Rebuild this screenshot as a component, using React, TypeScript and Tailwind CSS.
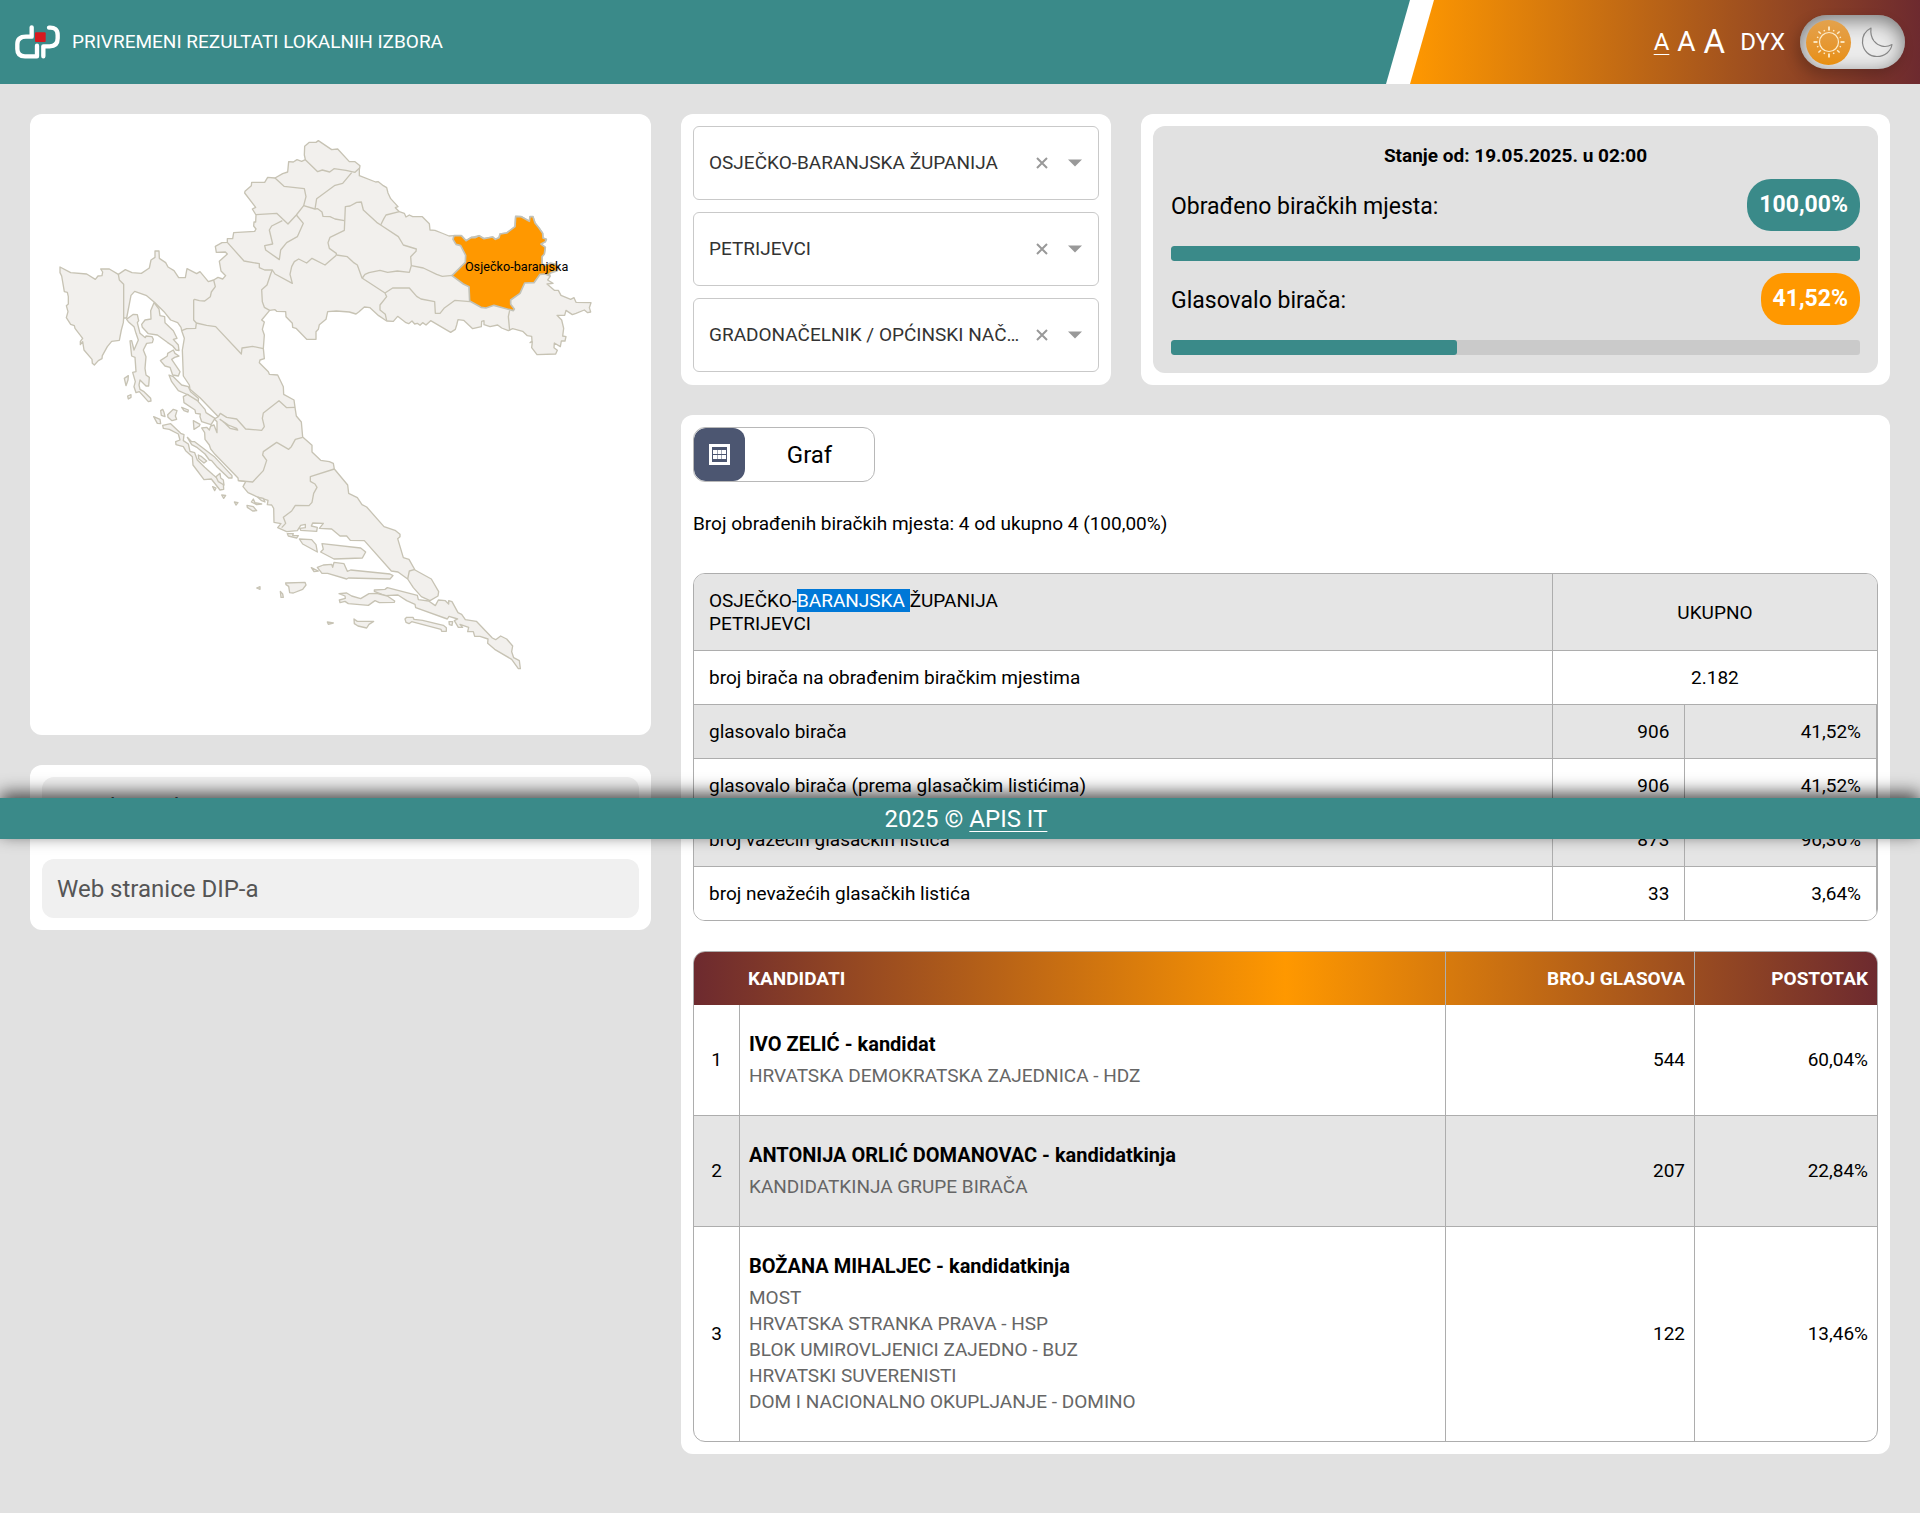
import React from "react";

const MAINLAND =
  "M90,441 122,458 170,462 196,478 204,468 216,467 218,456 212,447 238,447 265,463 286,449 306,458 334,460 358,444 363,420 375,412 375,393 387,393 388,415 407,428 414,441 432,452 446,473 466,473 471,446 500,461 510,455 535,485 551,480 564,472 578,477 587,467 573,453 568,424 592,402 586,396 559,397 556,379 576,368 592,367 592,356 608,356 611,338 674,334 678,327 671,318 672,306 677,306 678,285 667,267 677,262 644,219 645,214 664,197 665,187 704,187 713,172 735,174 758,161 773,156 776,125 790,126 801,119 815,124 826,119 823,105 824,79 838,67 858,67 865,62 905,89 923,87 958,125 975,125 990,137 988,150 988,167 1037,186 1045,185 1060,197 1070,203 1074,219 1082,236 1104,260 1096,263 1108,275 1123,280 1128,291 1138,285 1148,290 1177,290 1198,311 1200,330 1215,331 1235,339 1257,348 1272,347 1294,347 1308,362 1325,352 1347,347 1362,356 1388,351 1396,358 1407,353 1410,342 1430,339 1455,320 1457,289 1474,290 1498,304 1500,290 1509,290 1515,309 1527,324 1538,340 1539,354 1549,358 1546,365 1533,372 1546,382 1543,402 1536,410 1536,432 1560,470 1553,480 1569,490 1551,492 1573,511 1585,511 1593,526 1622,538 1632,533 1638,547 1683,548 1678,563 1682,576 1673,578 1663,570 1638,580 1627,584 1608,571 1604,586 1581,586 1595,600 1601,625 1598,648 1608,650 1605,663 1594,663 1591,680 1573,669 1572,683 1582,691 1577,702 1521,704 1505,683 1507,665 1500,668 1506,663 1505,649 1492,647 1478,634 1448,626 1435,632 1415,624 1403,615 1380,620 1362,614 1362,602 1355,604 1354,620 1328,626 1301,601 1284,599 1280,615 1276,628 1262,637 1202,602 1188,615 1178,608 1170,616 1162,610 1154,612 1146,603 1136,611 1128,608 1103,589 1090,604 1070,603 1046,587 1020,563 1003,561 987,575 978,582 958,576 919,573 893,575 888,598 868,614 865,628 858,635 858,658 830,658 798,625 788,622 787,610 768,590 767,575 740,574 735,569 719,571 695,600 703,606 697,628 703,645 700,685 703,716 690,720 688,728 715,755 718,763 743,765 760,800 761,823 792,840 795,862 799,888 814,906 818,951 846,976 846,996 872,1021 898,1025 910,1030 913,1047 953,1095 956,1120 982,1133 996,1154 1010,1161 1062,1220 1095,1231 1110,1243 1110,1250 1103,1256 1120,1313 1137,1318 1155,1350 1204,1377 1226,1415 1224,1428 1200,1442 1174,1430 1150,1403 1133,1377 1104,1356 1084,1353 1003,1262 961,1261 950,1248 930,1248 905,1227 868,1225 880,1210 848,1209 844,1218 862,1222 860,1234 812,1231 810,1225 826,1223 826,1213 812,1216 802,1232 770,1235 743,1223 753,1211 732,1207 731,1165 725,1155 712,1154 714,1141 680,1130 654,1118 639,1100 647,1085 625,1082 624,1074 555,1003 542,987 538,975 525,958 524,938 515,924 530,922 538,930 542,918 552,915 561,938 561,905 553,897 565,890 510,833 480,808 478,795 460,768 457,690 463,655 455,632 453,622 443,608 422,600 402,575 375,548 350,527 314,514 303,526 290,594 281,594 280,608 274,630 268,661 245,664 232,680 217,707 216,716 205,722 193,735 187,730 186,718 162,690 158,665 151,674 151,664 158,655 135,625 133,617 122,613 109,593 114,575 109,557 115,552 115,530 112,517 103,515 95,468 90,458Z";

const OSIJEK =
  "M1272,347 1294,347 1308,362 1325,352 1335,353 1347,347 1362,356 1388,351 1396,358 1407,353 1410,342 1430,339 1455,320 1457,289 1474,290 1498,304 1500,290 1509,290 1515,309 1527,324 1538,340 1539,354 1549,358 1546,365 1533,372 1546,382 1543,402 1536,410 1536,432 1546,436 1562,429 1574,432 1586,440 1582,452 1566,457 1558,461 1560,468 1546,462 1530,463 1512,488 1484,489 1470,520 1442,540 1442,553 1453,567 1450,572 1392,556 1368,564 1353,562 1319,543 1317,500 1300,492 1266,467 1306,427 1307,406 1292,377 1278,373 1269,358Z";

const BORDERS = [
  "M265,463 268,480 281,493 281,594",
  "M551,480 556,500 544,516 541,530 524,543 508,542 494,538 491,540 491,600 499,609 497,625 470,626 455,632",
  "M499,609 530,616 557,620 634,702 636,684 668,679 700,686",
  "M592,367 642,423 688,431 688,443 704,450 727,450 722,462 711,495 695,509 697,545 703,562 719,571",
  "M727,450 735,462 787,490 780,463 785,440 793,425 806,417 830,429 846,415 885,435 919,406",
  "M919,405 919,400 898,385 894,368 900,352 943,331 946,260 960,258 980,247 994,246 1000,270 1040,307 1052,315 1105,350 1120,375 1159,387 1158,394 1142,410 1144,437 1138,457 1102,453 1073,457 1050,451 1017,458 1005,463 997,474",
  "M919,405 952,410 970,427 982,435 996,474 1065,519",
  "M1108,275 1068,285 1062,295 1052,315",
  "M1144,437 1180,444 1220,463 1237,469 1268,466",
  "M1065,519 1088,504 1138,504 1160,529 1173,537 1214,545 1216,580 1230,580 1242,565 1275,541 1320,545",
  "M1065,519 1070,530 1050,555 1050,570 1066,583 1070,602",
  "M1439,571 1435,590 1439,632",
  "M735,174 762,199 823,206 828,230 821,257 799,285 774,312 740,280 678,284",
  "M757,302 725,318 718,330 728,372 704,377 707,390 748,419 752,390 770,368 802,350 820,310 799,285",
  "M821,257 855,267 863,266 876,276 879,289 900,290 915,297 943,302",
  "M855,267 860,236 915,196 938,190 965,158",
  "M826,119 863,155 877,150 899,156 912,146 948,151 975,157 988,145",
  "M565,890 571,880 590,892 620,897 647,927 695,931 703,920 697,895 700,879 747,842 770,863 795,862",
  "M625,1082 668,1086 700,1052 710,1021 698,1005 700,995 740,967 776,988 784,980 796,958 818,952",
  "M913,1047 841,1070 841,1084 855,1092 861,1102 851,1120 846,1147 837,1157 796,1156 785,1173 760,1192 767,1210 755,1223",
  "M1133,1377 1138,1353 1155,1348",
  "M1445,1618 1451,1613",
];

// Islands of the northern Adriatic.
const NORTH_ISLANDS = [
  "M372,548 387,567 390,587 404,590 405,608 430,632 441,655 430,658 445,675 447,692 438,690 428,678 412,667 382,645 355,641 337,622 335,613 345,600 363,597 362,572Z",
  "M290,598 310,583 322,584 326,602 322,608 330,640 346,653 348,648 366,650 370,658 367,668 350,670 340,690 348,710 345,745 348,765 358,772 356,798 348,798 330,780 327,795 330,808 342,815 362,835 363,843 355,845 328,815 318,818 312,800 316,785 308,757 318,755 315,712 305,708 300,663 305,662 312,690 325,660 318,640 312,620 295,605Z",
  "M417,765 430,770 455,795 475,800 482,815 505,835 505,850 495,850 475,825 445,812 425,785Z",
  "M391,722 412,708 413,700 430,690 435,700 447,708 434,712 425,718 450,755 445,768 428,765 420,742 405,738Z",
  "M283,775 295,767 294,780 288,797Z",
  "M293,828 303,824 303,832 295,837Z",
  "M455,862 475,870 474,876 462,872Z",
];

// Islands around Zadar and Šibenik, and off Split.
const MIDDLE_ISLANDS = [
  "M131,110 150,118 152,131 142,130Z",
  "M152,92 158,88 162,97 165,110 154,106Z",
  "M173,104 190,88 201,92 196,108 200,118 186,122 174,112Z",
  "M250,122 270,133 268,138 252,148Z",
  "M220,50 232,43 262,62 285,88 288,98 315,115 303,134 275,125 270,110 271,102 257,100 255,90 222,68Z",
  "M158,136 182,131 212,160 222,164 220,182 235,192 240,214 254,218 262,240 284,262 310,285 340,310 341,328 330,330 304,297 282,299 249,255 247,230 227,212 220,200 198,194 197,185 210,180 205,162 178,148 160,145Z",
  "M232,172 245,185 254,185 315,232 366,287 366,294 356,294 322,262 305,242 298,240 285,222 262,203 245,194Z",
  "M265,225 275,230 290,243 282,249 266,236Z",
  "M318,290 330,280 332,294 340,300 342,315 325,305Z",
  "M308,320 318,324 314,332Z",
  "M330,118 345,130 360,145 383,150 380,145 355,135Z",
  "M335,345 347,346 341,355Z",
  "M373,366 384,368 378,375Z",
  "M411,376 430,380 440,392 428,393 412,382Z",
  "M424,366 430,357 435,368 455,372 440,374Z",
  "M443,352 460,355 465,366 455,362Z",
  "M532,461 550,461 548,466 565,467 560,474 535,468Z",
  "M568,477 605,479 618,494 622,516 578,492Z",
  "M636,491 752,504 767,516 757,534 672,537 632,516 640,508Z",
  "M604,563 625,573 612,575Z",
  "M527,609 585,607 588,615 578,628 550,639 539,638 536,619 528,614Z",
  "M511,634 518,642 520,652 513,652Z",
  "M440,624 450,620 450,628Z",
  "M652,726 670,729 655,733Z",
  "M622,562 640,555 665,553 668,562 672,547 702,551 712,574 722,570 840,582 849,587 840,597 715,594 710,597 653,580 636,580Z",
];

// Southern islands and the Dubrovnik coast.
const SOUTH_ISLANDS = [
  "M133,630 165,628 172,623 262,646 265,659 296,663 316,677 325,660 346,662 356,672 356,662 366,665 384,698 395,703 406,719 439,724 487,774 497,779 512,768 530,777 548,798 545,815 551,833 568,842 571,866 565,866 545,838 494,808 473,790 474,777 450,769 434,769 430,755 413,755 416,742 390,733 398,742 385,742 373,722 383,717 357,709 352,717 257,683 255,673 230,662 204,645 165,647 133,634Z",
  "M357,725 368,725 366,736 358,734Z",
  "M225,717 230,712 249,712 252,718 278,721 340,736 349,743 349,754 335,754 333,748 245,725 237,731 228,727Z",
  "M27,641 50,639 65,648 92,656 117,641 140,640 172,648 194,663 193,667 148,668 135,662 115,676 55,671 45,664 30,668 28,660 46,655 45,648Z",
  "M72,717 82,724 131,724 117,733 110,744 84,738 73,731Z",
];

function CroatiaMap() {
  return (
    <svg
      viewBox="0 -18 1863 1863"
      className="block aspect-square w-full"
      role="img"
      aria-label="Karta županija"
      fill="#f2f0ed"
      stroke="#c7c3b4"
      strokeWidth="4"
      strokeLinejoin="round"
    >
      <path d={MAINLAND} />
      {BORDERS.map((d) => (
        <path key={d} d={d} fill="none" />
      ))}
      {NORTH_ISLANDS.map((d) => (
        <path key={d} d={d} />
      ))}
      <g transform="translate(240 780)">
        {MIDDLE_ISLANDS.map((d) => (
          <path key={d} d={d} />
        ))}
      </g>
      <g transform="translate(900 780)">
        {SOUTH_ISLANDS.map((d) => (
          <path key={d} d={d} />
        ))}
      </g>
      <path d={OSIJEK} fill="#ff9800" stroke="#c2c2b8" strokeWidth="5" />
      <text x="1460" y="454" textAnchor="middle" fontSize="38" fill="#000" stroke="none">
        Osječko-baranjska
      </text>
    </svg>
  );
}

function Logo() {
  return (
    <svg viewBox="0 0 135 102" className="h-[34px] w-[45px]" aria-hidden="true">
      <g fill="none" stroke="#fff" strokeWidth="13" strokeLinejoin="round" strokeLinecap="round">
        <path d="M50,7 V35 H33 Q7,35 7,58 V72 Q7,94 30,94 H66 V62" />
        <path d="M102,8 Q128,6 128,30 V40 Q128,64 104,64 H85 V94" />
      </g>
      <rect x="60" y="22" width="32" height="29" rx="3" fill="#d71a1f" />
    </svg>
  );
}

function ThemeSwitch() {
  const rays = Array.from({ length: 16 }, (_, i) => i * 22.5);
  return (
    <label className="flex h-[54px] w-[105px] cursor-pointer items-center justify-between rounded-full bg-[#ececec] pr-3 pl-[6px] shadow-[inset_0_5px_20px_rgba(0,0,0,0.5),-4px_6px_14px_rgba(0,0,0,0.2)]">
      <input type="checkbox" className="sr-only" aria-label="Tamni način rada" />
      <span className="flex size-[45px] items-center justify-center rounded-full bg-linear-to-b from-[#e3a24c] to-[#e88f0c]">
        <svg viewBox="-16 -16 32 32" className="size-8" fill="none" stroke="#fdeccb">
          <circle r="9.5" strokeWidth="1.2" />
          {rays.map((a, i) => (
            <path
              key={a}
              d={i % 4 === 0 ? "M0,-15.5V-11.5" : i % 2 === 0 ? "M0,-15V-11.5" : "M0,-13V-11.5"}
              strokeWidth={i % 4 === 0 ? 1.8 : 1.4}
              transform={`rotate(${a})`}
            />
          ))}
        </svg>
      </span>
      <svg viewBox="0 0 32 32" className="size-8" fill="none" stroke="#868686" strokeWidth="1.2" strokeLinejoin="round">
        <path d="M10,2 C4,5 1,10 1.500,17 C2.500,25 8,30.500 16,30.500 C24,30.500 30,25 31,18.500 C24,22.500 17,20 13,15 C10,11 9.500,6 10,2Z" />
      </svg>
    </label>
  );
}

function Header() {
  return (
    <header className="flex h-[84px] bg-[#3a8a89] text-white">
      <div className="flex min-w-0 flex-1 items-center gap-3 pl-[15px]">
        <Logo />
        <h1 className="text-[19px] leading-6">PRIVREMENI REZULTATI LOKALNIH IZBORA</h1>
      </div>
      <div className="w-[534px] shrink-0 bg-white [clip-path:polygon(24px_0,100%_0,100%_100%,0_100%)]">
        <div className="ml-6 flex h-full items-center justify-end gap-[15px] bg-linear-to-r/srgb from-[#ff9800] to-[#6d2a2f] pr-[15px] [clip-path:polygon(24px_0,100%_0,100%_100%,0_100%)]">
          <div className="flex items-center gap-2">
            <button type="button" className="text-[24px] leading-7 underline underline-offset-4 decoration-1">A</button>
            <button type="button" className="text-[28px] leading-8">A</button>
            <button type="button" className="text-[33px] leading-10">A</button>
          </div>
          <button type="button" className="text-[24px] leading-7">DYX</button>
          <ThemeSwitch />
        </div>
      </div>
    </header>
  );
}

function FilterSelect({ label, options }: { label: string; options: string[] }) {
  return (
    <div className="flex h-[74px] items-center rounded-md border border-[#c9c9c9] bg-white pr-4 pl-[15px]">
      <select
        aria-label={label}
        className="h-full min-w-0 flex-1 cursor-pointer appearance-none truncate bg-transparent text-[19px] text-[#333] outline-none"
      >
        {options.map((o) => (
          <option key={o}>{o}</option>
        ))}
      </select>
      <button type="button" aria-label="Očisti" className="ml-2">
        <svg viewBox="0 0 12 12" className="size-3" stroke="#999" strokeWidth="2" aria-hidden="true">
          <path d="M1,1 11,11 M11,1 1,11" />
        </svg>
      </button>
      <svg viewBox="0 0 14 8" className="ml-5 h-2 w-[14px]" fill="#999" aria-hidden="true">
        <path d="M0,0.500 H14 L7,7.500Z" />
      </svg>
    </div>
  );
}

function Progress({ label, value, text, badge }: { label: string; value: number; text: string; badge: string }) {
  return (
    <div>
      <div className="flex h-[52px] items-center justify-between">
        <span className="pt-1 text-[23px]">{label}</span>
        <span className={`flex h-full items-center rounded-3xl px-3 text-[23px] font-bold text-white ${badge}`}>{text}</span>
      </div>
      <div
        role="progressbar"
        aria-label={label}
        aria-valuenow={value}
        className="mt-[15px] h-[15px] overflow-hidden rounded-[3px] bg-[#cacaca]"
      >
        <div className="h-full rounded-[3px] bg-[#3a8a89]" style={{ width: `${value}%` }} />
      </div>
    </div>
  );
}

const TURNOUT = [
  { label: "glasovalo birača", count: "906", share: "41,52%" },
  { label: "glasovalo birača (prema glasačkim listićima)", count: "906", share: "41,52%" },
  { label: "broj važećih glasačkih listića", count: "873", share: "96,36%" },
  { label: "broj nevažećih glasačkih listića", count: "33", share: "3,64%" },
];

function TurnoutTable() {
  return (
    <div className="overflow-hidden rounded-xl border border-[#adadad]">
      <table className="w-full table-fixed border-separate border-spacing-0 text-[19px] leading-[23px]">
        <colgroup>
          <col className="w-[72.6%]" />
          <col className="w-[11.2%]" />
          <col />
        </colgroup>
        <thead>
          <tr className="h-[77px] bg-[#e5e5e5]">
            <th scope="col" className="border-r border-b border-[#adadad] px-[15px] text-left font-normal">
              OSJEČKO-<span className="bg-[#0078d7] text-white">BARANJSKA </span>ŽUPANIJA
              <br />
              PETRIJEVCI
            </th>
            <th scope="col" colSpan={2} className="border-b border-[#adadad] font-normal">
              UKUPNO
            </th>
          </tr>
        </thead>
        <tbody className="[&>tr:last-child]:h-[53px] [&>tr:last-child>*]:border-b-0">
          <tr className="h-[54px]">
            <th scope="row" className="border-r border-b border-[#adadad] px-[15px] text-left font-normal">
              broj birača na obrađenim biračkim mjestima
            </th>
            <td colSpan={2} className="border-b border-[#adadad] text-center">
              2.182
            </td>
          </tr>
          {TURNOUT.map((r) => (
            <tr key={r.label} className="h-[54px] odd:bg-white even:bg-[#e5e5e5]">
              <th scope="row" className="border-r border-b border-[#adadad] px-[15px] text-left font-normal">
                {r.label}
              </th>
              <td className="border-r border-b border-[#adadad] px-[15px] text-right">{r.count}</td>
              <td className="border-r border-b border-[#adadad] px-[15px] text-right">{r.share}</td>
            </tr>
          ))}
        </tbody>
      </table>
    </div>
  );
}

const CANDIDATES = [
  { name: "IVO ZELIĆ - kandidat", parties: ["HRVATSKA DEMOKRATSKA ZAJEDNICA - HDZ"], votes: "544", share: "60,04%" },
  { name: "ANTONIJA ORLIĆ DOMANOVAC - kandidatkinja", parties: ["KANDIDATKINJA GRUPE BIRAČA"], votes: "207", share: "22,84%" },
  {
    name: "BOŽANA MIHALJEC - kandidatkinja",
    parties: [
      "MOST",
      "HRVATSKA STRANKA PRAVA - HSP",
      "BLOK UMIROVLJENICI ZAJEDNO - BUZ",
      "HRVATSKI SUVERENISTI",
      "DOM I NACIONALNO OKUPLJANJE - DOMINO",
    ],
    votes: "122",
    share: "13,46%",
  },
];

function CandidateTable() {
  return (
    <div className="mt-[30px] overflow-hidden rounded-xl border border-[#adadad]">
      <table className="w-full table-fixed border-separate border-spacing-0 text-[19px] leading-[26px]">
        <colgroup>
          <col className="w-[46px]" />
          <col />
          <col className="w-[249px]" />
          <col className="w-[182px]" />
        </colgroup>
        <thead>
          <tr className="h-[53px] bg-linear-to-r/srgb from-[#6d2a2f] via-[#ff9800] to-[#6d2a2f] text-white">
            <th aria-label="Redni broj" />
            <th scope="col" className="border-r border-[#adadad] px-2 text-left font-bold">KANDIDATI</th>
            <th scope="col" className="border-r border-[#adadad] px-[9px] text-right font-bold">BROJ GLASOVA</th>
            <th scope="col" className="px-[9px] text-right font-bold">POSTOTAK</th>
          </tr>
        </thead>
        <tbody className="[&>tr:last-child>*]:border-b-0">
          {CANDIDATES.map((c, i) => (
            <tr key={c.name} className="even:bg-[#e5e5e5]">
              <td className="border-r border-b border-[#adadad] text-center">{i + 1}</td>
              <td className="border-r border-b border-[#adadad] px-[9px] py-[26px]">
                <div className="mb-[6px] text-[20px] font-bold">{c.name}</div>
                {c.parties.map((p) => (
                  <div key={p} className="text-[#666]">{p}</div>
                ))}
              </td>
              <td className="border-r border-b border-[#adadad] px-[9px] text-right">{c.votes}</td>
              <td className="border-b border-[#adadad] px-[9px] text-right">{c.share}</td>
            </tr>
          ))}
        </tbody>
      </table>
    </div>
  );
}

function ViewToggle() {
  return (
    <div className="flex h-[55px] w-[182px] overflow-hidden rounded-xl border border-[#b8b8b8]">
      <button type="button" aria-label="Tablica" className="flex w-[51px] items-center justify-center rounded-xl bg-[#4c5671]">
        <svg viewBox="0 0 21 21" className="size-[21px]" aria-hidden="true">
          <rect x="1.500" y="1.500" width="18" height="18" fill="none" stroke="#fff" strokeWidth="3" />
          <path
            d="M4,6h4v4h-4z M8.500,6h4v4h-4z M13,6h4v4h-4z M4,11h4v4h-4z M8.500,11h4v4h-4z M13,11h4v4h-4z"
            fill="#fff"
          />
        </svg>
      </button>
      <button type="button" className="flex-1 text-[24px]">Graf</button>
    </div>
  );
}

export default function App() {
  return (
    <div className="relative min-h-screen bg-[#e1e1e1] font-[Roboto,sans-serif] text-black">
      <Header />
      <main className="grid grid-cols-[minmax(0,621fr)_minmax(0,1209fr)] items-start gap-[30px] p-[30px]">
        <div className="flex flex-col gap-[30px]">
          <section className="overflow-hidden rounded-xl bg-white">
            <CroatiaMap />
          </section>
          <nav className="flex flex-col gap-[23px] rounded-xl bg-white p-3">
            <a href="#rezultati" className="flex h-[59px] items-center rounded-xl bg-[#f0f0f0] px-[15px] text-[24px] text-[#555]">
              Rezultati izbora i
            </a>
            <a href="#dip" className="flex h-[59px] items-center rounded-xl bg-[#f0f0f0] px-[15px] text-[24px] text-[#555]">
              Web stranice DIP-a
            </a>
          </nav>
        </div>

        <div className="flex flex-col gap-[30px]">
          <div className="grid grid-cols-[minmax(0,430fr)_minmax(0,749fr)] gap-[30px]">
            <section className="flex flex-col gap-3 rounded-xl bg-white p-3">
              <FilterSelect label="Županija" options={["OSJEČKO-BARANJSKA ŽUPANIJA"]} />
              <FilterSelect label="Grad ili općina" options={["PETRIJEVCI"]} />
              <FilterSelect label="Vrsta izbora" options={["GRADONAČELNIK / OPĆINSKI NAČELNIK"]} />
            </section>
            <section className="rounded-xl bg-white p-3">
              <div className="rounded-xl bg-[#e1e1e1] p-[18px]">
                <h2 className="mb-3 text-center text-[19px] leading-[23px] font-bold">Stanje od: 19.05.2025. u 02:00</h2>
                <div className="flex flex-col gap-3">
                  <Progress label="Obrađeno biračkih mjesta:" value={100} text="100,00%" badge="bg-[#3a8a89]" />
                  <Progress label="Glasovalo birača:" value={41.52} text="41,52%" badge="bg-[#ff9800]" />
                </div>
              </div>
            </section>
          </div>

          <section className="rounded-xl bg-white p-3">
            <ViewToggle />
            <p className="mt-[26px] mb-[34px] text-[19px] leading-[31px]">
              Broj obrađenih biračkih mjesta: 4 od ukupno 4 (100,00%)
            </p>
            <TurnoutTable />
            <CandidateTable />
          </section>
        </div>
      </main>

      {/* The footer floats over the page content. */}
      <footer className="absolute inset-x-0 top-[798px] bg-[#3a8a89] pt-px pl-3 text-center text-[24px] leading-10 text-white shadow-[0_-5px_17px_rgba(0,0,0,0.7)]">
        2025 © <a href="#apis-it" className="underline decoration-1 underline-offset-4">APIS IT</a>
      </footer>
    </div>
  );
}
